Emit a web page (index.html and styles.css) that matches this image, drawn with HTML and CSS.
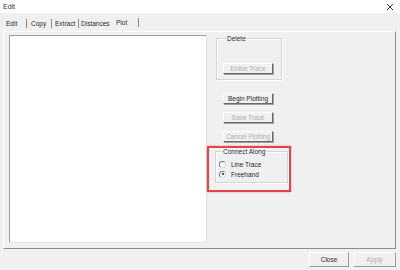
FILE: index.html
```html
<!DOCTYPE html>
<html lang="en">
<head>
    <meta charset="UTF-8">
    <title>Edit</title>
    <link rel="stylesheet" href="styles.css">
</head>
<body>

    <div class="window">
        <!-- Title bar -->
        <div class="titlebar">
            <span class="title">Edit</span>
            <svg class="close-x" width="8" height="8" viewBox="0 0 8 8">
                <path d="M1 1 L7 7 M7 1 L1 7" stroke="#222" stroke-width="0.9" fill="none"/>
            </svg>
        </div>

        <!-- Tabs -->
        <div class="tabs">
            <span class="tab tab-edit sep">Edit</span>
            <span class="tab tab-copy sep">Copy</span>
            <span class="tab tab-extract sep">Extract</span>
            <span class="tab tab-dist">Distances</span>
            <span class="tab tab-plot active">Plot</span>
        </div>

        <!-- Tab page -->
        <div class="page">
            <div class="listbox"></div>

            <div class="controls">
                <fieldset class="group group-delete">
                    <legend>Delete</legend>
                    <button class="btn" disabled>Entire Trace</button>
                </fieldset>

                <button class="btn btn-begin">Begin Plotting</button>
                <button class="btn btn-next" disabled>Save Trace</button>
                <button class="btn btn-next" disabled>Cancel Plotting</button>

                <fieldset class="group group-connect">
                    <legend>Connect Along</legend>
                    <label class="radio"><span class="dot"></span>Line Trace</label>
                    <label class="radio"><span class="dot checked"></span>Freehand</label>
                </fieldset>
            </div>

            <!-- red highlight drawn over the screenshot -->
            <div class="highlight"></div>
        </div>

        <!-- Bottom buttons -->
        <div class="footer">
            <button class="btn btn-footer">Close</button>
            <button class="btn btn-footer" disabled>Apply</button>
        </div>
    </div>

</body>
</html>
```

FILE: styles.css
```css
body {
    margin: 0;
    padding: 0;
    font-family: "Liberation Sans", Arial, sans-serif;
    font-size: 6.5px;
    color: #2a2a2a;
    background-color: #f0f0f0;
}

.window {
    width: 400px;
    height: 270px;
    display: flex;
    flex-direction: column;
    overflow: hidden;
}

.titlebar {
    height: 13px;
    background-color: #fff;
    display: flex;
    align-items: center;
    justify-content: space-between;
    padding: 0 6px 0 3px;
}

.title {
    font-size: 7px;
    color: #333;
}

/* tabs */
.tabs {
    height: 18px;
    display: flex;
    align-items: center;
    padding-left: 3px;
}

.tab {
    box-sizing: border-box;
    padding-left: 3px;
    line-height: 9px;
    margin-top: 3px;
}

.tab.sep {
    border-right: 1px solid #8a8a8a;
}

.tab-edit { width: 24px; }
.tab-copy { width: 25px; padding-left: 4px; }
.tab-extract { width: 27px; }
.tab-dist { width: 34px; padding-left: 2px; }

.tab.active {
    width: 26px;
    padding-left: 3px;
    border-right: 1px solid #8a8a8a;
    margin-top: 0;
}

/* tab page */
.page {
    position: relative;
    margin-left: 3px;
    width: 393px;
    height: 218px;
    box-sizing: border-box;
    border-top: 1px solid #fff;
    border-left: 1px solid #fff;
    border-right: 1px solid #8c8c8c;
    border-bottom: 1px solid #8c8c8c;
    padding: 3px 0 0 5px;
    display: flex;
}

.listbox {
    width: 198px;
    height: 208px;
    box-sizing: border-box;
    background-color: #fff;
    border-top: 1px solid #a0a0a0;
    border-left: 1px solid #a0a0a0;
    border-right: 1px solid #e3e3e3;
    border-bottom: 1px solid #e3e3e3;
}

.controls {
    margin-left: 9px;
    display: flex;
    flex-direction: column;
}

.group {
    margin: 0;
    padding: 0;
    border: 1px solid #d5d5d5;
    box-shadow: inset 1px 1px 0 #fff, 1px 1px 0 #fff;
}

.group legend {
    padding: 0 1px;
    margin-left: 3px;
    line-height: 7px;
}

.group-delete {
    width: 66px;
    height: 45px;
    box-sizing: border-box;
    display: flex;
    flex-direction: column;
    align-items: flex-start;
    padding: 21px 0 0 6px;
}

.btn {
    font-family: inherit;
    font-size: 6.5px;
    width: 50px;
    height: 11px;
    padding: 0;
    background-color: #f0f0f0;
    color: #2a2a2a;
    border: 1px solid #fff;
    border-right-color: #6a6a6a;
    border-bottom-color: #6a6a6a;
    box-shadow: 1px 1px 0 #a0a0a0;
    box-sizing: border-box;
    line-height: 8px;
}

.btn:disabled {
    color: #adadad;
}

.btn-begin {
    margin: 13px 0 0 7px;
}

.btn-next {
    margin: 8px 0 0 7px;
}

.group-connect {
    width: 73px;
    height: 35px;
    box-sizing: border-box;
    margin: 6px 0 0 -1px;
    padding: 4px 0 0 3px;
}

.radio {
    display: flex;
    align-items: center;
    height: 10px;
}

.dot {
    width: 5px;
    height: 5px;
    border: 1px solid #7a7a7a;
    border-right-color: #dcdcdc;
    border-bottom-color: #dcdcdc;
    border-radius: 50%;
    background-color: #fff;
    margin-right: 5px;
    position: relative;
}

.dot.checked::after {
    content: "";
    position: absolute;
    left: 1.5px;
    top: 1.5px;
    width: 2px;
    height: 2px;
    border-radius: 50%;
    background-color: #222;
}

.highlight {
    position: absolute;
    left: 203px;
    top: 114px;
    width: 84px;
    height: 46px;
    box-sizing: border-box;
    border: 2px solid #e0444c;
    box-shadow: 0 0 2px rgba(224, 68, 76, 0.5);
}

/* footer */
.footer {
    flex: 1;
    display: flex;
    justify-content: flex-end;
    align-items: flex-start;
    padding: 3px 4px 0 0;
    gap: 4px;
}

.btn-footer {
    height: 15px;
    width: 40px;
    border: 1px solid #fff;
    border-right-color: #9a9a9a;
    border-bottom-color: #9a9a9a;
    box-shadow: none;
}

.btn-footer:last-child {
    width: 43px;
}
```
